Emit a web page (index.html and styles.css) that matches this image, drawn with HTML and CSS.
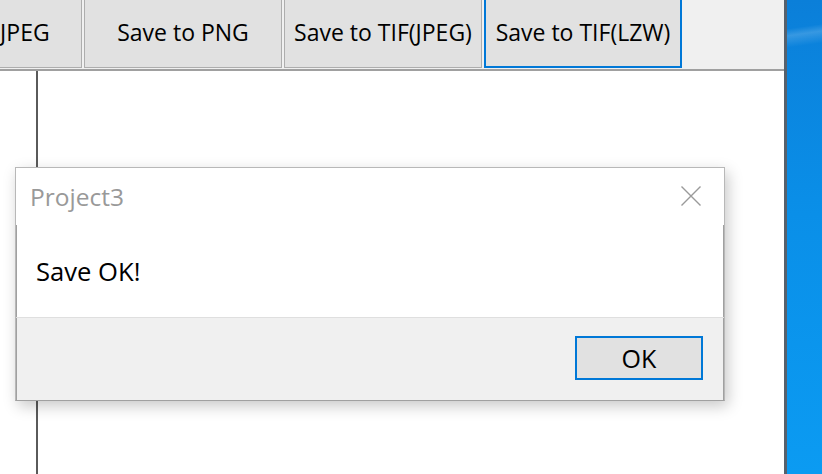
FILE: index.html
```html
<!DOCTYPE html>
<html>
<head>
<meta charset="utf-8">
<link rel="stylesheet" href="styles.css">
</head>
<body>
<div class="screen">
  <div class="app">
    <div class="toolbar">
      <div class="btns">
        <div class="tbtn">Save to JPEG</div>
        <div class="tbtn">Save to PNG</div>
        <div class="tbtn">Save to TIF(JPEG)</div>
        <div class="tbtn focused">Save to TIF(LZW)</div>
      </div>
    </div>
    <div class="canvas"><div class="vline"></div></div>
    <div class="dialog">
      <div class="dlg-title">
        <span class="dlg-caption">Project3</span>
        <svg class="dlg-close" width="20" height="20" viewBox="0 0 20 20"><path d="M0.5 0.5 L19.5 19.5 M19.5 0.5 L0.5 19.5" stroke="#9a9a9a" stroke-width="1.4" fill="none"/></svg>
      </div>
      <div class="dlg-body">Save OK!</div>
      <div class="dlg-footer"><div class="okbtn">OK</div></div>
    </div>
  </div>
  <div class="edge"></div>
  <div class="desktop"></div>
</div>
</body>
</html>
```
FILE: styles.css
```css
html, body { margin: 0; padding: 0; }
body { font-family: "Open Sans", "Noto Sans", sans-serif; color: #000; }
.screen { display: flex; width: 822px; height: 474px; overflow: hidden; }
.app { width: 784px; flex: none; position: relative; display: flex; flex-direction: column; background: #fff; }
.toolbar { height: 69px; background: #f0f0f0; border-bottom: 2px solid #a0a0a0; overflow: hidden; flex: none; }
.btns { display: flex; gap: 2px; margin-left: -116px; margin-top: -4px; }
.tbtn { width: 198px; height: 72px; box-sizing: border-box; flex: none; background: #e1e1e1; border: 1px solid #adadad; display: flex; align-items: center; justify-content: center; font-size: 23px; white-space: nowrap; }
.tbtn.focused { border: 2px solid #0078d7; }
.canvas { flex: 1; padding-left: 36px; display: flex; }
.vline { width: 2px; background: #5a5a5a; }
.dialog { position: absolute; left: 15px; top: 167px; width: 710px; height: 234px; box-sizing: border-box; border: 1px solid #b8b8b8; border-bottom-color: #a0a0a0; background: #fff; box-shadow: 3px 5px 14px rgba(0,0,0,0.22); display: flex; flex-direction: column; }
.dlg-title { height: 57px; flex: none; display: flex; align-items: center; justify-content: space-between; padding: 0 23px 0 14px; }
.dlg-caption { font-size: 24.5px; color: #999; }
.dlg-close { display: block; margin-top: -2px; }
.dlg-body { height: 92px; flex: none; display: flex; align-items: center; padding-left: 20px; font-size: 25.6px; box-shadow: inset 1px 0 0 #a0a0a0, inset -1px 0 0 #a0a0a0; }
.dlg-footer { flex: 1; background: #f0f0f0; border-top: 1px solid #dfdfdf; display: flex; justify-content: flex-end; align-items: flex-start; padding: 18px 21px 0 0; box-shadow: inset 1px 0 0 #a0a0a0, inset -1px 0 0 #a0a0a0; }
.okbtn { width: 128px; height: 44px; box-sizing: border-box; border: 2px solid #0078d7; background: #e1e1e1; display: flex; align-items: center; justify-content: center; font-size: 25px; }
.edge { width: 3px; flex: none; background: #56616d; }
.desktop { flex: 1; background:
  linear-gradient(172deg, transparent 0%, transparent 6%, rgba(255,255,255,0.18) 7.5%, transparent 10%),
  linear-gradient(180deg, #0b7fd9 0%, #0a8fe8 45%, #0b9bf2 100%); }
```
